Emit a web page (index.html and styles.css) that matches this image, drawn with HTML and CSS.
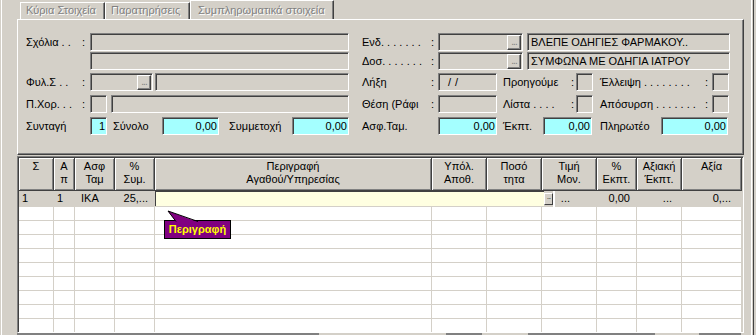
FILE: index.html
```html
<!DOCTYPE html>
<html lang="el">
<head>
    <meta charset="UTF-8">
    <meta name="viewport" content="width=device-width, initial-scale=1.0">
    <title>Συμπληρωματικά στοιχεία</title>
    <link rel="stylesheet" href="styles.css">
</head>
<body>
    <div class="tabs">
        <div class="tab tab-main">Κύρια Στοιχεία</div>
        <div class="tab tab-notes">Παρατηρήσεις</div>
        <div class="tab tab-extra">Συμπληρωματικά στοιχεία</div>
    </div>

    <div class="sheet">
        <div class="side side-left">
            <div class="row gap-1">
                <span class="lbl">Σχόλια . .</span><span class="colon">:</span>
                <div class="box w-259"></div>
            </div>
            <div class="row gap-3">
                <span class="lbl"></span><span class="colon"></span>
                <div class="box w-259"></div>
            </div>
            <div class="row gap-4">
                <span class="lbl">Φυλ.Σ . .</span><span class="colon">:</span>
                <div class="box has-btn w-63"><span class="dots">...</span></div>
                <div class="box w-194 ml-2"></div>
            </div>
            <div class="row gap-4">
                <span class="lbl">Π.Χορ. . .</span><span class="colon">:</span>
                <div class="box w-17"></div>
                <div class="box w-238 ml-4"></div>
            </div>
            <div class="row">
                <span class="lbl">Συνταγή</span><span class="colon"></span>
                <div class="box num w-17">1</div>
                <span class="cap w-49 ml-6">Σύνολο</span>
                <div class="box num w-57">0,00</div>
                <span class="cap w-63 ml-10">Συμμετοχή</span>
                <div class="box num w-57">0,00</div>
            </div>
        </div>

        <div class="side side-right">
            <div class="row gap-1">
                <span class="lbl">Ενδ. . . . . . .</span><span class="colon">:</span>
                <div class="box has-btn w-85"><span class="dots">...</span></div>
                <div class="box text w-203 ml-4">ΒΛΕΠΕ ΟΔΗΓΙΕΣ ΦΑΡΜΑΚΟΥ..</div>
            </div>
            <div class="row gap-3">
                <span class="lbl">Δοσ. . . . . . .</span><span class="colon">:</span>
                <div class="box has-btn w-85"><span class="dots">...</span></div>
                <div class="box text w-203 ml-4">ΣΥΜΦΩΝΑ ΜΕ ΟΔΗΓΙΑ ΙΑΤΡΟΥ</div>
            </div>
            <div class="row gap-4">
                <span class="lbl">Λήξη</span><span class="colon">:</span>
                <div class="box text date w-59">/ /</div>
                <span class="cap w-58 ml-6">Προηγούμε</span><span class="colon w-15">:</span>
                <div class="box w-17"></div>
                <span class="cap w-105 ml-7">Έλλειψη . . . . . . . .</span><span class="colon">:</span>
                <div class="box w-17"></div>
            </div>
            <div class="row gap-4">
                <span class="lbl">Θέση (Ράφι</span><span class="colon">:</span>
                <div class="box w-59"></div>
                <span class="cap w-58 ml-6">Λίστα . . . .</span><span class="colon w-15">:</span>
                <div class="box w-17"></div>
                <span class="cap w-105 ml-7">Απόσυρση . . . . . . .</span><span class="colon">:</span>
                <div class="box w-17"></div>
            </div>
            <div class="row">
                <span class="cap w-76">Ασφ.Ταμ.</span>
                <div class="box num w-59">0,00</div>
                <span class="cap w-40 ml-6">Έκπτ.</span>
                <div class="box num w-49">0,00</div>
                <span class="cap w-61 ml-8">Πληρωτέο</span>
                <div class="box num w-67">0,00</div>
            </div>
        </div>
    </div>

    <div class="grid">
        <div class="grid-head">
            <div class="hc c1">Σ</div>
            <div class="hc c2">Α<br>π</div>
            <div class="hc c3">Ασφ<br>Ταμ</div>
            <div class="hc c4">%<br>Συμ.</div>
            <div class="hc c5">Περιγραφή<br>Αγαθού/Υπηρεσίας</div>
            <div class="hc c6">Υπόλ.<br>Αποθ.</div>
            <div class="hc c7">Ποσό<br>τητα</div>
            <div class="hc c8">Τιμή<br>Μον.</div>
            <div class="hc c9">%<br>Εκπτ.</div>
            <div class="hc c10">Αξιακή<br>Έκπτ.</div>
            <div class="hc c11">Αξία</div>
        </div>

        <div class="grid-row current">
            <div class="gc c1 pl-3">1</div>
            <div class="gc c2 pl-3">1</div>
            <div class="gc c3 pl-6">ΙΚΑ</div>
            <div class="gc c4 right pr-6">25,...</div>
            <div class="editor"></div>
            <div class="editor-btn">...</div>
            <div class="editor-gap"></div>
            <div class="gc w-42 right pr-26">...</div>
            <div class="gc c9 right pr-6">0,00</div>
            <div class="gc c10 right pr-9">...</div>
            <div class="gc c11 right pr-10">0,...</div>
        </div>

        <div class="grid-row"><div class="gc c1"></div><div class="gc c2"></div><div class="gc c3"></div><div class="gc c4"></div><div class="gc c5"></div><div class="gc c6"></div><div class="gc c7"></div><div class="gc c8"></div><div class="gc c9"></div><div class="gc c10"></div><div class="gc c11"></div></div>
        <div class="grid-row"><div class="gc c1"></div><div class="gc c2"></div><div class="gc c3"></div><div class="gc c4"></div><div class="gc c5"></div><div class="gc c6"></div><div class="gc c7"></div><div class="gc c8"></div><div class="gc c9"></div><div class="gc c10"></div><div class="gc c11"></div></div>
        <div class="grid-row"><div class="gc c1"></div><div class="gc c2"></div><div class="gc c3"></div><div class="gc c4"></div><div class="gc c5"></div><div class="gc c6"></div><div class="gc c7"></div><div class="gc c8"></div><div class="gc c9"></div><div class="gc c10"></div><div class="gc c11"></div></div>
        <div class="grid-row"><div class="gc c1"></div><div class="gc c2"></div><div class="gc c3"></div><div class="gc c4"></div><div class="gc c5"></div><div class="gc c6"></div><div class="gc c7"></div><div class="gc c8"></div><div class="gc c9"></div><div class="gc c10"></div><div class="gc c11"></div></div>
        <div class="grid-row"><div class="gc c1"></div><div class="gc c2"></div><div class="gc c3"></div><div class="gc c4"></div><div class="gc c5"></div><div class="gc c6"></div><div class="gc c7"></div><div class="gc c8"></div><div class="gc c9"></div><div class="gc c10"></div><div class="gc c11"></div></div>
        <div class="grid-row"><div class="gc c1"></div><div class="gc c2"></div><div class="gc c3"></div><div class="gc c4"></div><div class="gc c5"></div><div class="gc c6"></div><div class="gc c7"></div><div class="gc c8"></div><div class="gc c9"></div><div class="gc c10"></div><div class="gc c11"></div></div>
        <div class="grid-row"><div class="gc c1"></div><div class="gc c2"></div><div class="gc c3"></div><div class="gc c4"></div><div class="gc c5"></div><div class="gc c6"></div><div class="gc c7"></div><div class="gc c8"></div><div class="gc c9"></div><div class="gc c10"></div><div class="gc c11"></div></div>
        <div class="grid-row"><div class="gc c1"></div><div class="gc c2"></div><div class="gc c3"></div><div class="gc c4"></div><div class="gc c5"></div><div class="gc c6"></div><div class="gc c7"></div><div class="gc c8"></div><div class="gc c9"></div><div class="gc c10"></div><div class="gc c11"></div></div>
        <div class="grid-row"><div class="gc c1"></div><div class="gc c2"></div><div class="gc c3"></div><div class="gc c4"></div><div class="gc c5"></div><div class="gc c6"></div><div class="gc c7"></div><div class="gc c8"></div><div class="gc c9"></div><div class="gc c10"></div><div class="gc c11"></div></div>

        <!-- hint balloon over the description cell -->
        <div class="hint">Περιγραφή</div>
        <svg class="hint-tail" width="34" height="14" viewBox="0 0 34 14">
            <polygon points="1,1 31,12 9,12" fill="#800080"/>
            <polyline points="9,11.5 1,1 31,11.5" fill="none" stroke="#000" stroke-width="1"/>
        </svg>
    </div>

    <div class="bottom-bar">
        <span class="edge e1"></span>
        <span class="edge e2"></span>
        <span class="edge e3"></span>
        <span class="edge e4"></span>
    </div>
</body>
</html>
```

FILE: styles.css
```css
body {
    margin: 0;
    width: 756px;
    height: 335px;
    overflow: hidden;
    font-family: "Liberation Sans", Arial, sans-serif;
    font-size: 11px;
    color: #000;
    background-color: #d4d0c8;
    background-image: linear-gradient(90deg,
        transparent 1px, #fff 1px, #fff 2px, transparent 2px,
        transparent 751px, #fff 751px, #fff 752px, transparent 752px,
        transparent 753px, #404040 753px, #404040 754px, transparent 754px);
}

/* tabs */

.tabs {
    display: flex;
    align-items: flex-end;
    height: 19px;
    padding-left: 20px;
}

.tab {
    box-sizing: border-box;
    height: 17px;
    padding: 0 5px;
    border-top: 1px solid #fff;
    border-left: 1px solid #fff;
    border-right: 1px solid #404040;
    box-shadow: inset -1px 0 #808080;
    color: #808080;
    text-shadow: 1px 1px #fff;
    line-height: 15px;
    white-space: nowrap;
}

.tab-main,
.tab-notes {
    width: 85px;
}

.tab-extra {
    width: 144px;
    height: 19px;
    padding-left: 7px;
    line-height: 19px;
}

/* tab sheet */

.sheet {
    box-sizing: border-box;
    display: flex;
    width: 727px;
    height: 136px;
    margin-left: 17px;
    padding-top: 13px;
    border: 1px solid;
    border-color: #fff #404040 #404040 #fff;
    box-shadow: inset -1px -1px #808080;
}

.side-left {
    width: 323px;
    margin-left: 8px;
}

.side-right {
    width: 368px;
    margin-left: 13px;
}

.row {
    display: flex;
    align-items: center;
    height: 18px;
    white-space: nowrap;
}

.gap-1 { margin-bottom: 1px; }
.gap-3 { margin-bottom: 3px; }
.gap-4 { margin-bottom: 4px; }

.lbl {
    width: 56px;
}

.side-right .lbl {
    width: 69px;
}

.colon {
    width: 8px;
}

.side-right .colon {
    width: 7px;
}

.side-right .colon.w-15 {
    box-sizing: border-box;
    width: 15px;
    padding-left: 10px;
}

.box {
    box-sizing: border-box;
    height: 18px;
    border: 1px solid;
    border-color: #808080 #fff #fff #808080;
    box-shadow: inset 1px 1px #404040;
    background-color: #d4d0c8;
    overflow: hidden;
    line-height: 16px;
}

.box.text {
    padding-left: 3px;
}

.box.date {
    padding-left: 9px;
    word-spacing: 1px;
}

.box.num {
    background-color: #a4ffff;
    text-align: right;
    padding-right: 1px;
}

.box.has-btn {
    display: flex;
    align-items: center;
    justify-content: flex-end;
    padding-right: 1px;
}

.dots {
    box-sizing: border-box;
    width: 14px;
    height: 15px;
    margin-top: 1px;
    border: 1px solid;
    border-color: #fff #404040 #404040 #fff;
    box-shadow: inset -1px -1px #808080;
    color: #808080;
    font-size: 10px;
    line-height: 12px;
    text-align: center;
    letter-spacing: -1px;
}

/* widths and gaps used by the form */

.w-17 { width: 17px; }
.w-40 { width: 40px; }
.w-42 { width: 42px; }
.w-49 { width: 49px; }
.w-57 { width: 57px; }
.w-58 { width: 58px; }
.w-59 { width: 59px; }
.w-61 { width: 61px; }
.w-63 { width: 63px; }
.w-67 { width: 67px; }
.w-76 { width: 76px; }
.w-85 { width: 85px; }
.w-105 { width: 105px; }
.w-194 { width: 194px; }
.w-203 { width: 203px; }
.w-238 { width: 238px; }
.w-259 { width: 259px; }

.ml-2 { margin-left: 2px; }
.ml-4 { margin-left: 4px; }
.ml-6 { margin-left: 6px; }
.ml-7 { margin-left: 7px; }
.ml-8 { margin-left: 8px; }
.ml-10 { margin-left: 10px; }

/* grid */

.grid {
    position: relative;
    box-sizing: border-box;
    width: 727px;
    height: 177px;
    margin: 1px 0 0 17px;
    padding: 1px 0 0 1px;
    border: 1px solid;
    border-color: #808080 #fff #fff #808080;
    box-shadow: inset 1px 1px #404040;
    overflow: hidden;
}

.grid-head,
.grid-row {
    display: flex;
}

.hc {
    box-sizing: border-box;
    height: 33px;
    padding-top: 2px;
    border-right: 1px solid #404040;
    border-bottom: 1px solid #404040;
    box-shadow: inset 1px 1px #fff, inset -1px -1px #808080;
    text-align: center;
    line-height: 13px;
    white-space: nowrap;
}

.gc {
    box-sizing: border-box;
    height: 14px;
    border-right: 1px solid #d4d0c8;
    border-bottom: 1px solid #d4d0c8;
    background-color: #fff;
    line-height: 14px;
    white-space: nowrap;
}

.c1 { width: 35px; }
.c2 { width: 21px; }
.c3 { width: 40px; }
.c4 { width: 40px; }
.c5 { width: 277px; }
.c6 { width: 55px; }
.c7 { width: 55px; }
.c8 { width: 55px; }
.c9 { width: 40px; }
.c10 { width: 45px; }
.c11 { width: 60px; }

.grid-row.current .gc {
    height: 16px;
    background-color: #d4d0c8;
    line-height: 15px;
}

.right { text-align: right; }
.pl-3 { padding-left: 3px; }
.pl-6 { padding-left: 6px; }
.pr-6 { padding-right: 6px; }
.pr-9 { padding-right: 9px; }
.pr-10 { padding-right: 10px; }
.pr-26 { padding-right: 26px; }

.editor {
    box-sizing: border-box;
    width: 389px;
    height: 15px;
    border-top: 1px solid #404040;
    border-left: 1px solid #404040;
    background-color: #ffffe1;
}

.editor-btn {
    box-sizing: border-box;
    width: 9px;
    height: 12px;
    margin-top: 2px;
    border: 1px solid;
    border-color: #fff #404040 #404040 #fff;
    background-color: #d4d0c8;
    color: #404040;
    font-size: 8px;
    line-height: 6px;
    letter-spacing: -1px;
    text-align: center;
    overflow: hidden;
}

.editor-gap {
    width: 2px;
    height: 16px;
    background-color: #fff;
}

.hint {
    position: absolute;
    left: 146px;
    top: 63px;
    box-sizing: border-box;
    width: 67px;
    height: 19px;
    border: 1px solid #000;
    background-color: #800080;
    color: #ffff00;
    font-weight: bold;
    line-height: 17px;
    text-align: center;
}

.hint-tail {
    position: absolute;
    left: 149px;
    top: 53px;
}

/* tops of the controls below, cut off by the window */

.bottom-bar {
    display: flex;
    height: 2px;
}

.edge {
    height: 2px;
    background-color: #808080;
}

.e1 { width: 302px; margin-left: 17px; }
.e2 { width: 36px; margin-left: 127px; }
.e3 { width: 127px; margin-left: 46px; }
.e4 { width: 42px; margin-left: 44px; }
```
